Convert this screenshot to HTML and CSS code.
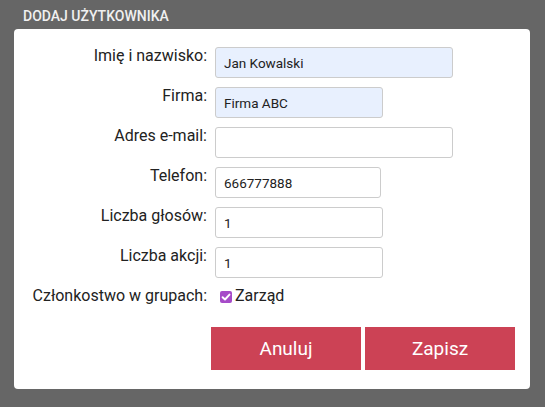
FILE: index.html
```html
<!DOCTYPE html>
<html lang="pl">
<head>
<meta charset="utf-8">
<title>Dodaj użytkownika</title>
<link rel="stylesheet" href="styles.css">
</head>
<body>
<div class="dialog">
  <h1 class="title">DODAJ UŻYTKOWNIKA</h1>
  <div class="card">
    <form class="form">
      <label class="label" for="f-name">Imię i nazwisko:</label>
      <div class="field"><input id="f-name" class="input wide filled" value="Jan Kowalski"></div>

      <label class="label" for="f-firm">Firma:</label>
      <div class="field"><input id="f-firm" class="input narrow filled" value="Firma ABC"></div>

      <label class="label" for="f-mail">Adres e-mail:</label>
      <div class="field"><input id="f-mail" class="input wide" value=""></div>

      <label class="label" for="f-tel">Telefon:</label>
      <div class="field"><input id="f-tel" class="input phone" value="666777888"></div>

      <label class="label" for="f-votes">Liczba głosów:</label>
      <div class="field"><input id="f-votes" class="input narrow" value="1"></div>

      <label class="label" for="f-shares">Liczba akcji:</label>
      <div class="field"><input id="f-shares" class="input narrow" value="1"></div>

      <span class="label label-check">Członkostwo w grupach:</span>
      <div class="check-row">
        <span class="checkbox">
          <svg width="12" height="12" viewBox="0 0 12 12"><path d="M2.6 6.2 L5 8.5 L9.5 3.6" fill="none" stroke="#fff" stroke-width="1.9" stroke-linecap="round" stroke-linejoin="round"/></svg>
        </span>
        <span class="check-text">Zarząd</span>
      </div>
    </form>
    <div class="actions">
      <button class="btn" type="button">Anuluj</button>
      <button class="btn" type="button">Zapisz</button>
    </div>
  </div>
</div>
</body>
</html>
```

FILE: styles.css
```css
* { box-sizing: border-box; }
html, body { margin: 0; padding: 0; }
body {
  background: #666666;
  font-family: Roboto, "Liberation Sans", Arial, sans-serif;
  width: 545px;
  height: 407px;
  overflow: hidden;
}
.dialog {
  padding: 0 0 0 14px;
}
.title {
  margin: 0;
  padding: 8px 0 0 9px;
  height: 29px;
  font-size: 14px;
  font-weight: 500;
  color: #f0f0f0;
  letter-spacing: 0;
  line-height: 17px;
}
.card {
  width: 516px;
  height: 360px;
  background: #ffffff;
  border-radius: 4px;
  padding: 18px 15px 0 0;
  display: flex;
  flex-direction: column;
}
.form {
  display: grid;
  grid-template-columns: 193px 1fr;
  column-gap: 8px;
  row-gap: 9px;
  align-items: start;
}
.label {
  text-align: right;
  font-size: 16px;
  line-height: 17px;
  color: #222222;
}
.field { height: 31px; }
.input {
  display: block;
  height: 31px;
  border: 1px solid #cccccc;
  border-radius: 3px;
  background: #ffffff;
  padding: 0 0 0 8px;
  font-family: Roboto, "Liberation Sans", Arial, sans-serif;
  font-size: 13.5px;
  color: #222222;
  outline: none;
}
.filled { background: #e8f0fe; }
.wide { width: 238px; }
.narrow { width: 168px; }
.phone { width: 166px; }
.check-row {
  display: flex;
  align-items: center;
  height: 18px;
  padding-left: 5px;
}
.checkbox {
  width: 12px;
  height: 12px;
  border-radius: 2px;
  background: #a64bc8;
  display: flex;
  margin-top: 1px;
}
.check-text {
  margin-left: 3px;
  font-size: 16px;
  color: #222222;
  line-height: 18px;
}
.actions {
  display: flex;
  justify-content: flex-end;
  gap: 4px;
  margin-top: 22px;
}
.btn {
  width: 150px;
  height: 43px;
  border: none;
  border-radius: 0;
  background: #cc4255;
  color: #ffffff;
  font-family: Roboto, "Liberation Sans", Arial, sans-serif;
  font-size: 19px;
  font-weight: 400;
  padding: 0;
}
```
